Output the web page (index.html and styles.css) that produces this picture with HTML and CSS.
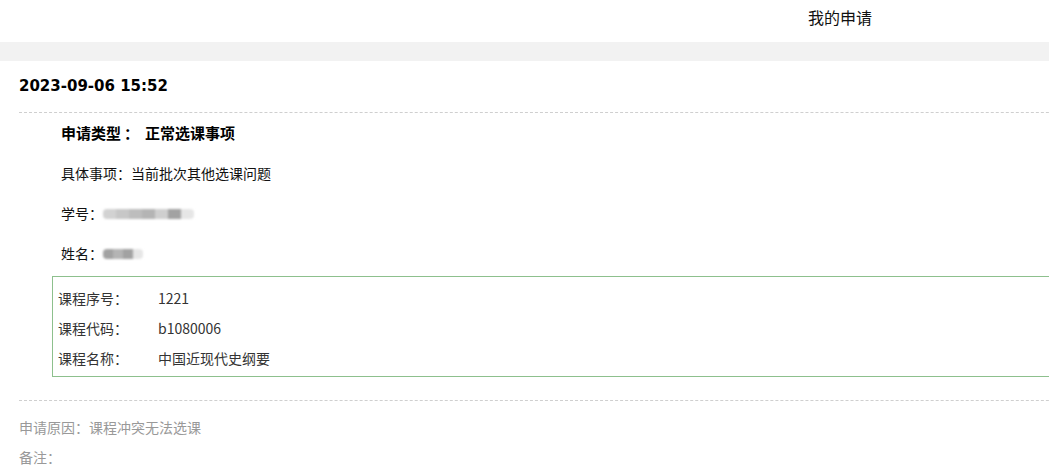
FILE: index.html
```html
<!DOCTYPE html>
<html lang="zh-CN">
<head>
<meta charset="utf-8">
<title>我的申请</title>
<link rel="stylesheet" href="styles.css">
</head>
<body>
<header class="top">
  <span class="top-title">我的申请</span>
</header>
<div class="band"></div>
<main class="content">
  <div class="date">2023-09-06 15:52</div>
  <div class="details">
    <div class="row strong"><span>申请类型</span><span class="colon">：</span><span class="type-val">正常选课事项</span></div>
    <div class="row">具体事项：当前批次其他选课问题</div>
    <div class="row">学号：<span class="blur blur-id"><i class="b1"></i><i class="b2"></i><i class="b6"></i><i class="b4"></i><i class="b5"></i><i class="b3"></i><i class="b7"></i></span></div>
    <div class="row">姓名：<span class="blur blur-name"><i class="b3"></i><i class="b4"></i><i class="b3"></i><i class="b7"></i></span></div>
  </div>
  <div class="course">
    <div class="crow"><span class="clabel">课程序号：</span><span class="cval">1221</span></div>
    <div class="crow"><span class="clabel">课程代码：</span><span class="cval">b1080006</span></div>
    <div class="crow"><span class="clabel">课程名称：</span><span class="cval">中国近现代史纲要</span></div>
  </div>
  <div class="notes">
    <div class="nrow">申请原因：课程冲突无法选课</div>
    <div class="nrow">备注：</div>
  </div>
</main>
</body>
</html>
```
FILE: styles.css
```css
html, body {
  margin: 0;
  padding: 0;
  overflow: hidden;
  background: #fff;
}
body {
  font-family: "Noto Sans CJK SC", "Liberation Sans", sans-serif;
  font-size: 14px;
  color: #000;
}
.top {
  height: 42px;
  display: flex;
  align-items: center;
  padding-left: 808px;
  box-sizing: border-box;
}
.top-title {
  font-size: 16px;
  line-height: 34px;
  padding-bottom: 8px;
  color: #111;
}
.band {
  height: 19px;
  background: #f2f2f2;
}
.content {
  padding-left: 19px;
  width: 1100px;
}
.date {
  font-family: "DejaVu Sans", "Liberation Sans", sans-serif;
  font-weight: bold;
  font-size: 15px;
  line-height: 51px;
  border-bottom: 1px dashed #cfcfcf;
}
.details {
  padding-left: 42px;
}
.row {
  line-height: 40px;
  height: 40px;
  display: flex;
  align-items: center;
  color: #111;
}
.row.strong {
  font-weight: bold;
  font-size: 15px;
  color: #000;
}
.colon {
  width: 18px;
  text-align: right;
}
.type-val {
  margin-left: 6px;
}
.blur {
  display: inline-flex;
  height: 10px;
  filter: blur(0.8px);
  border-radius: 4px;
  overflow: hidden;
  margin-top: 2px;
}
.blur i {
  display: block;
  height: 10px;
}
.blur-id i { width: 13px; }
.blur-name i { width: 10px; }
.b1 { background: #d2d2d2; }
.b2 { background: #c7c7c7; }
.b3 { background: #a2a2a2; }
.b4 { background: #b4b4b4; }
.b5 { background: #cfcfcf; }
.b6 { background: #bdbdbd; }
.b7 { background: #e6e6e6; }
.course {
  margin: 3px 0 0 33px;
  border: 1px solid #8dc08d;
  padding: 6px 0 3px 5px;
  color: #333;
}
.crow {
  display: flex;
  line-height: 30px;
  height: 30px;
}
.clabel {
  width: 100px;
  flex: none;
}
.notes {
  margin-top: 23px;
  border-top: 1px dashed #cfcfcf;
  padding-top: 11px;
  color: #999;
}
.nrow {
  line-height: 30px;
  height: 30px;
}
```
